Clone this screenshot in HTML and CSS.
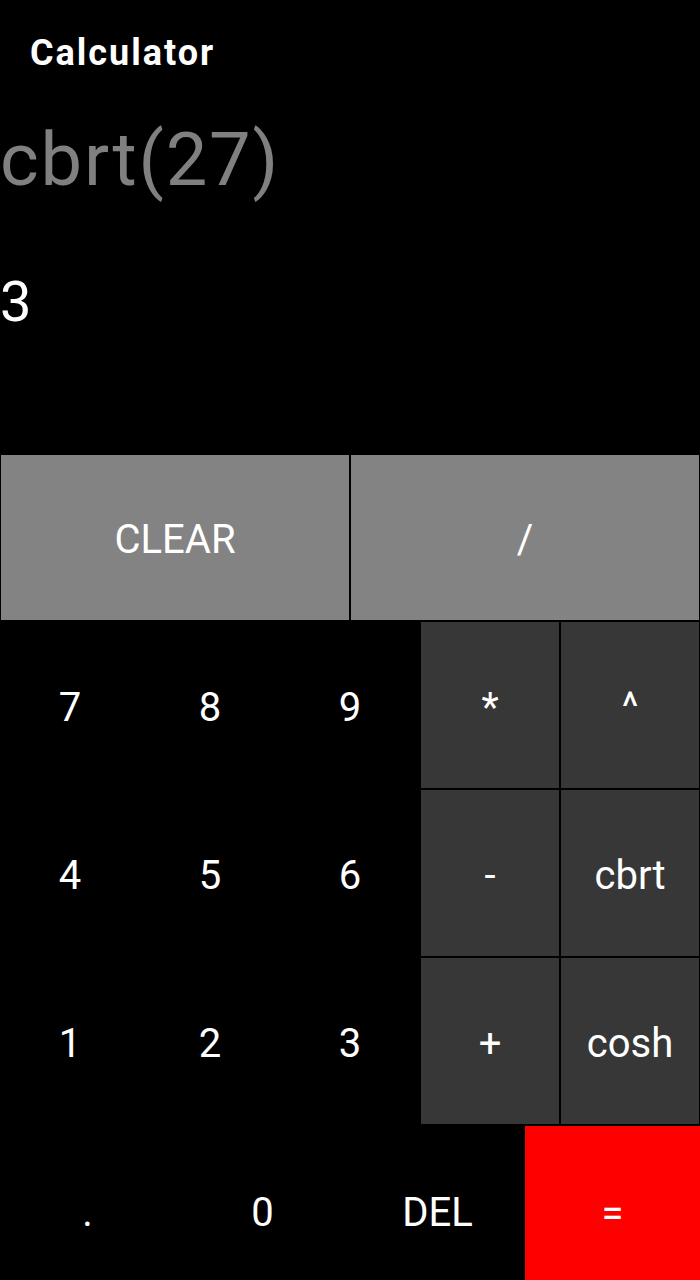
FILE: index.html
```html
<!DOCTYPE html>
<html>
<head>
<meta charset="utf-8">
<link rel="stylesheet" href="styles.css">
</head>
<body>
<div class="app">
  <div class="title">Calculator</div>
  <div class="expr">cbrt(27)</div>
  <div class="result">3</div>
  <div class="keypad">
    <div class="row row-top">
      <div class="key key-gray">CLEAR</div>
      <div class="key key-gray">/</div>
    </div>
    <div class="row row-mid">
      <div class="key">7</div>
      <div class="key">8</div>
      <div class="key">9</div>
      <div class="key key-dark">*</div>
      <div class="key key-dark">^</div>
    </div>
    <div class="row row-mid">
      <div class="key">4</div>
      <div class="key">5</div>
      <div class="key">6</div>
      <div class="key key-dark">-</div>
      <div class="key key-dark">cbrt</div>
    </div>
    <div class="row row-mid">
      <div class="key">1</div>
      <div class="key">2</div>
      <div class="key">3</div>
      <div class="key key-dark">+</div>
      <div class="key key-dark">cosh</div>
    </div>
    <div class="row row-bottom">
      <div class="key">.</div>
      <div class="key">0</div>
      <div class="key">DEL</div>
      <div class="key key-red">=</div>
    </div>
  </div>
</div>
</body>
</html>
```

FILE: styles.css
```css
html, body {
  margin: 0;
  padding: 0;
  background: #000;
}

body {
  font-family: Roboto, "Liberation Sans", sans-serif;
  color: #fff;
}

.app {
  width: 700px;
  height: 1280px;
  overflow: hidden;
  display: flex;
  flex-direction: column;
}

.title {
  padding: 35px 0 0 30px;
  font-size: 36px;
  line-height: 36px;
  font-weight: bold;
  letter-spacing: 2px;
}

.expr {
  margin-top: 52px;
  font-size: 74px;
  line-height: 74px;
  color: #808080;
  letter-spacing: 1.8px;
}

.result {
  margin-top: 77px;
  font-size: 56px;
  line-height: 56px;
  color: #fff;
}

.keypad {
  margin-top: 124px;
  display: flex;
  flex-direction: column;
}

.row {
  display: grid;
  flex: none;
}

.row-top {
  grid-template-columns: 1fr 1fr;
  height: 167px;
}

.row-mid {
  grid-template-columns: repeat(5, 1fr);
  height: 168px;
}

.row-bottom {
  grid-template-columns: repeat(4, 1fr);
  height: 175px;
}

.key {
  margin: 1px;
  display: flex;
  align-items: center;
  justify-content: center;
  font-size: 40px;
  color: #fff;
}

.row-top .key,
.row-mid .key {
  padding-top: 4px;
}

.key-gray {
  background: #838383;
}

.key-dark {
  background: #373737;
}

.key-red {
  background: #ff0000;
  margin: 1px 0 0 0;
}
```
